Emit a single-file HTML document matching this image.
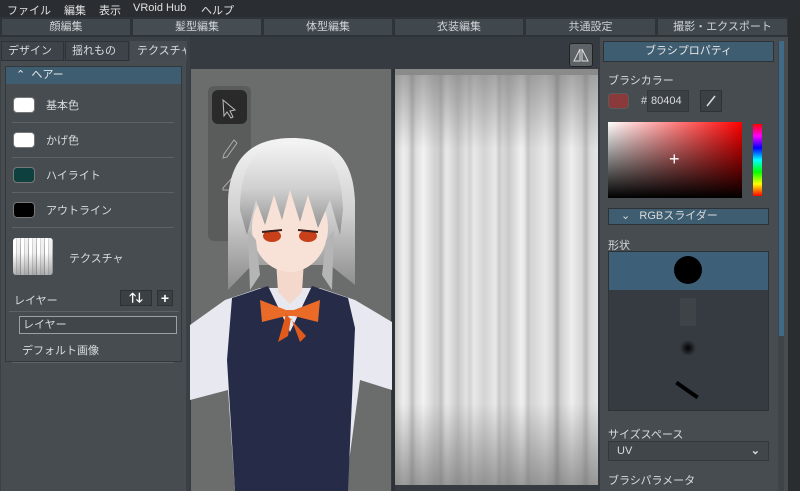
<!DOCTYPE html>
<html><head><meta charset="utf-8"><style>
*{margin:0;padding:0;box-sizing:border-box}
body{width:800px;height:491px;overflow:hidden;background:#33393e;font-family:"Liberation Sans","Noto Sans CJK JP",sans-serif;color:#d8dcde;font-size:11px;position:relative}
.a{position:absolute}
.menu{left:0;top:0;width:800px;height:17px;background:#2a2e32;font-size:11px;color:#e0e0e0}
.menu span{position:absolute;top:2px}
.tab{top:18px;height:18px;background:#40474d;border:1px solid #2e3338;text-align:center;line-height:16px;color:#cfd3d6;font-size:11px}
.st{top:41px;height:20px;background:#3d4348;border:1px solid #2d3236;line-height:18px;padding-left:6px;font-size:11px}
.sw{left:13px;width:22px;height:16px;border-radius:4px;border:1px solid #777}
.lab{left:46px;font-size:11px}
.hr{left:12px;width:162px;height:1px;background:#5c6266}
</style></head><body>
<div class="a menu"><span style="left:7px">ファイル</span><span style="left:64px">編集</span><span style="left:99px">表示</span><span style="left:133px">VRoid Hub</span><span style="left:201px">ヘルプ</span></div>
<div class="a" style="left:0;top:17px;width:800px;height:20px;background:#2f3438"></div>
<div class="a tab" style="left:1px;width:130px">顔編集</div>
<div class="a tab" style="left:132px;width:130px;background:#454c52">髪型編集</div>
<div class="a tab" style="left:263px;width:130px">体型編集</div>
<div class="a tab" style="left:394px;width:130px">衣装編集</div>
<div class="a tab" style="left:525px;width:131px">共通設定</div>
<div class="a tab" style="left:657px;width:131px">撮影・エクスポート</div>
<div class="a" style="left:788px;top:17px;width:12px;height:474px;background:#2a2d30"></div>
<!-- left -->
<div class="a" style="left:0;top:37px;width:190px;height:454px;background:#3a4045"></div>
<div class="a st" style="left:1px;width:63px;top:41px;">デザイン</div>
<div class="a st" style="left:65px;width:64px">揺れもの</div>
<div class="a st" style="left:130px;width:57px;background:#454b50;border-color:#454b50;overflow:hidden;white-space:nowrap">テクスチャ</div>
<div class="a" style="left:1px;top:61px;width:185px;height:430px;background:#464c50"></div>
<div class="a" style="left:5px;top:66px;width:177px;height:296px;border:1px solid #33383c;background:#464c50"></div>
<div class="a" style="left:6px;top:67px;width:175px;height:17px;background:#3f5d70;color:#e6e6e6;line-height:17px;padding-left:10px">⌃&nbsp;&nbsp;ヘアー</div>
<div class="a sw" style="top:97px;background:#fff"></div><div class="a lab" style="top:97px">基本色</div>
<div class="a hr" style="top:122px"></div>
<div class="a sw" style="top:132px;background:#fff"></div><div class="a lab" style="top:132px">かげ色</div>
<div class="a hr" style="top:157px"></div>
<div class="a sw" style="top:167px;background:#0f4040"></div><div class="a lab" style="top:167px">ハイライト</div>
<div class="a hr" style="top:192px"></div>
<div class="a sw" style="top:202px;background:#000"></div><div class="a lab" style="top:202px">アウトライン</div>
<div class="a hr" style="top:227px"></div>
<div class="a" style="left:13px;top:238px;width:40px;height:37px;border-radius:3px;background:linear-gradient(180deg,rgba(255,255,255,.3),rgba(255,255,255,0) 40%,rgba(120,120,120,.6)),repeating-linear-gradient(90deg,#fff 0 3px,#ccc 3px 4px,#eee 4px 7px,#aaa 7px 8px)"></div>
<div class="a" style="left:69px;top:250px">テクスチャ</div>
<div class="a" style="left:14px;top:292px">レイヤー</div>
<div class="a" style="left:120px;top:290px;width:32px;height:16px;background:#3b4045;border:1px solid #2d3236;color:#fff;font-weight:bold;font-size:13px;line-height:14px;text-align:center">🡑🡓</div>
<div class="a" style="left:157px;top:290px;width:16px;height:16px;background:#3b4045;border:1px solid #2d3236;color:#fff;font-weight:bold;font-size:14px;line-height:14px;text-align:center">+</div>
<div class="a" style="left:9px;top:311px;width:170px;height:1px;background:#5c6266"></div>
<div class="a" style="left:19px;top:316px;width:158px;height:18px;border:1px solid #9aa0a4;line-height:16px;padding-left:3px;background:#40464a">レイヤー</div>
<div class="a" style="left:22px;top:342px">デフォルト画像</div>
<div class="a hr" style="top:362px"></div>
<!-- viewport -->
<div class="a" style="left:190px;top:37px;width:410px;height:454px;background:#353b40"></div>
<div class="a" style="left:569px;top:43px;width:24px;height:24px;background:#5d6266;border:1px solid #222;border-radius:3px"></div>
<svg class="a" style="left:569px;top:43px" width="24" height="24"><path d="M11 6 L11 18 L5 18 Z M13 6 L13 18 L19 18 Z" fill="none" stroke="#ddd" stroke-width="1"/></svg>
<div class="a" style="left:191px;top:69px;width:200px;height:422px;background:#6b6c6c"></div>
<div class="a" style="left:208px;top:86px;width:43px;height:155px;border-radius:6px;background:#5a5b5b"></div>
<div class="a" style="left:212px;top:90px;width:35px;height:34px;border-radius:6px;background:#2a2a2a"></div>
<svg class="a" style="left:190px;top:60px" width="210" height="431" viewBox="0 0 210 431">
<path d="M33 40 L34 56 L37 52 L41 58 L43 57 L40 51 L45 50 Z" fill="none" stroke="#bbb" stroke-width="1"/>
<path d="M34 94 L44 80 L47 83 L37 97 L33 98 Z" fill="none" stroke="#aaa"/>
<path d="M33 128 L42 118 L47 123 L40 130 L33 130 Z" fill="none" stroke="#aaa"/>
<defs><linearGradient id="hg" x1="0" y1="0" x2="0" y2="1"><stop offset="0" stop-color="#f4f4f4"/><stop offset=".5" stop-color="#d0d0d0"/><stop offset="1" stop-color="#8a8a8a"/></linearGradient></defs>
<!-- body -->
<path d="M0 265 L35 240 L70 228 L130 228 L165 240 L202 262 L202 330 L170 320 L155 431 L45 431 L38 330 L0 340 Z" fill="#e8e9f0"/>
<path d="M42 238 L78 226 L100 272 L122 226 L158 238 L165 268 L158 431 L45 431 L37 300 Z" fill="#262c48"/>
<!-- hair back -->
<path d="M38 230 L38 140 C40 95 65 78 102 78 C140 78 163 95 165 140 L165 225 L140 205 L62 205 Z" fill="url(#hg)"/>
<!-- neck/face -->
<path d="M86 200 L114 200 L112 232 L100 244 L88 232 Z" fill="#f4d8cc"/>
<ellipse cx="100" cy="168" rx="38" ry="44" fill="#f8e2d8"/>
<!-- bangs -->
<path d="M50 150 C50 100 70 82 102 82 C134 82 152 100 153 150 L150 175 L140 140 L128 168 L118 135 L110 162 L100 130 L92 160 L84 135 L75 165 L66 140 L57 175 Z" fill="url(#hg)"/>
<path d="M60 230 L58 170 L66 180 L70 215 Z M142 230 L144 170 L136 180 L132 215 Z" fill="#b5b5b5"/>
<ellipse cx="82" cy="176" rx="9" ry="6" fill="#c8401a"/>
<ellipse cx="118" cy="176" rx="9" ry="6" fill="#c8401a"/>
<path d="M72 172 L92 170 M108 170 L128 172" stroke="#3a2020" stroke-width="2"/>
<!-- bow -->
<path d="M70 240 L96 250 L104 250 L130 240 L128 262 L104 256 L96 256 L72 262 Z" fill="#ea6a28"/>
<path d="M96 254 L88 282 L98 276 L101 258 L110 282 L116 276 Z" fill="#e05a1c"/>
</svg>
<div class="a" style="left:392px;top:69px;width:3px;height:422px;background:#2d3236"></div>
<div class="a" style="left:395px;top:69px;width:203px;height:6px;background:#8a8a8a"></div>
<div class="a" style="left:395px;top:75px;width:203px;height:410px;background:linear-gradient(180deg,rgba(110,110,110,.55),rgba(255,255,255,0) 18%,rgba(255,255,255,0) 80%,rgba(100,100,100,.6)),repeating-linear-gradient(90deg,rgba(0,0,0,0) 0 13px,rgba(0,0,0,.12) 17px,rgba(0,0,0,0) 21px 29px),linear-gradient(90deg,#ccc,#eee 4%,#d8d8d8 9%,#f2f2f2 14%,#d0d0d0 20%,#e8e8e8 26%,#c8c8c8 31%,#f0f0f0 37%,#d4d4d4 44%,#ececec 50%,#cacaca 56%,#f0f0f0 62%,#d6d6d6 68%,#eaeaea 74%,#c6c6c6 80%,#eeeeee 87%,#d2d2d2 93%,#e4e4e4)"></div>
<!-- right -->
<div class="a" style="left:600px;top:37px;width:188px;height:454px;background:#464c50"></div>
<div class="a" style="left:603px;top:41px;width:171px;height:21px;background:#3f5d70;border:1px solid #2d3236;text-align:center;line-height:19px;color:#e6e6e6">ブラシプロパティ</div>
<div class="a" style="left:778px;top:41px;width:6px;height:450px;background:#3e4448"></div>
<div class="a" style="left:779px;top:41px;width:5px;height:295px;background:#3f6a88"></div>
<div class="a" style="left:608px;top:72px">ブラシカラー</div>
<div class="a" style="left:608px;top:93px;width:21px;height:16px;border-radius:4px;background:#8a3a3a;border:1px solid #5a5a5a"></div>
<div class="a" style="left:641px;top:95px">#</div>
<div class="a" style="left:647px;top:90px;width:42px;height:22px;background:#3b4045;border:1px solid #33383c;line-height:20px;padding-left:3px">80404</div>
<div class="a" style="left:700px;top:90px;width:22px;height:22px;background:#3b4045;border:1px solid #2d3236"></div>
<svg class="a" style="left:700px;top:90px" width="22" height="22"><path d="M7 16 L15 6" stroke="#ddd" stroke-width="1.5"/></svg>
<div class="a" style="left:608px;top:122px;width:134px;height:76px;background:linear-gradient(180deg,rgba(0,0,0,0),#000),linear-gradient(90deg,#fff,#f00)"></div>
<div class="a" style="left:669px;top:149px;color:#fff;font-size:18px">+</div>
<div class="a" style="left:753px;top:124px;width:9px;height:72px;background:linear-gradient(180deg,#f00,#f0f,#00f,#0ff,#0f0,#ff0,#f00)"></div>
<div class="a" style="left:608px;top:208px;width:161px;height:17px;background:#3f5d70;border:1px solid #2d3236;line-height:15px;padding-left:12px">⌄&nbsp;&nbsp;&nbsp;RGBスライダー</div>
<div class="a" style="left:608px;top:237px">形状</div>
<div class="a" style="left:608px;top:251px;width:161px;height:160px;background:#363b42;border:1px solid #2d3236"></div>
<div class="a" style="left:609px;top:252px;width:159px;height:38px;background:#3d5f78"></div>
<div class="a" style="left:674px;top:256px;width:28px;height:28px;border-radius:50%;background:#000"></div>
<div class="a" style="left:680px;top:298px;width:16px;height:28px;background:#3e4348"></div>
<div class="a" style="left:680px;top:340px;width:16px;height:16px;border-radius:50%;background:radial-gradient(#000,rgba(0,0,0,0) 70%)"></div>
<div class="a" style="left:674px;top:388px;width:26px;height:4px;background:#000;transform:rotate(35deg)"></div>
<div class="a" style="left:608px;top:426px">サイズスペース</div>
<div class="a" style="left:608px;top:441px;width:161px;height:20px;background:#40464a;border:1px solid #33383c;line-height:18px;padding-left:8px">UV<span style="position:absolute;right:8px;font-weight:bold">⌄</span></div>
<div class="a" style="left:608px;top:472px">ブラシパラメータ</div>
</body></html>
